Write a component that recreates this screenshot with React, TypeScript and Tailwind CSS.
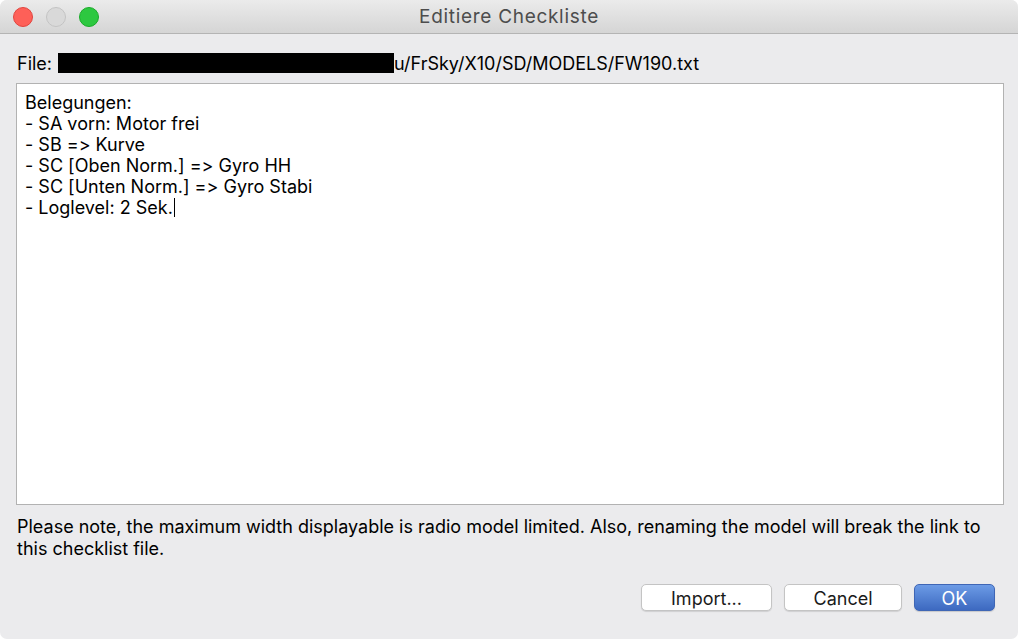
import React from "react";

const lines = [
  "Belegungen:",
  "- SA vorn: Motor frei",
  "- SB => Kurve",
  "- SC [Oben Norm.] => Gyro HH",
  "- SC [Unten Norm.] => Gyro Stabi",
  "- Loglevel: 2 Sek.",
];

function Light({ color, ring }: { color: string; ring: string }) {
  return <span className={`w-[20px] h-[20px] rounded-full border ${color} ${ring}`} />;
}

export default function App() {
  return (
    <div
      className="w-[1021px] h-[640px] bg-white [font-feature-settings:'calt'_0,'liga'_0]"
      style={{ fontFamily: "Inter, \"Liberation Sans\", sans-serif" }}
    >
      <div className="w-[1018px] h-[639px] rounded-[7px] overflow-hidden bg-[#ebebed] flex flex-col">
        {/* title bar */}
        <div className="h-[34px] shrink-0 grid grid-cols-[1fr_auto_1fr] items-center bg-gradient-to-b from-[#ebebeb] to-[#d5d5d5] border-b border-[#b4b4b4]">
          <div className="flex items-center gap-[13px] pl-[13px]">
            <Light color="bg-[#fe6058]" ring="border-[#e0443e]" />
            <Light color="bg-[#d9d9d9]" ring="border-[#c3c3c3]" />
            <Light color="bg-[#2dc840]" ring="border-[#1aab29]" />
          </div>
          <div className="text-[19px] tracking-[0.7px] text-[#4d4d4d] pt-[1px]">Editiere Checkliste</div>
          <div />
        </div>

        {/* body */}
        <div className="flex-1 flex flex-col px-[16px]">
          <div className="flex items-center h-[20px] mt-[19px] text-[18px] text-black">
            <span className="ml-[1px]">File:</span>
            <span className="w-[336px] h-[20px] bg-black ml-[6px]" />
            <span>u/FrSky/X10/SD/MODELS/FW190.txt</span>
          </div>

          <div className="mt-[10px] h-[422px] w-[988px] bg-white border border-[#b2b2b2] pt-[8px] pl-[8px] text-[18px] leading-[21px] text-black">
            {lines.map((l, i) => (
              <div key={i} className="flex items-center">
                <span>{l}</span>
                {i === lines.length - 1 && <span className="w-[1px] h-[19px] bg-black ml-[1px]" />}
              </div>
            ))}
          </div>

          <p className="mt-[11px] ml-[1px] text-[18px] leading-[22px] text-black w-[980px]">
            Please note, the maximum width displayable is radio model limited. Also, renaming the model will break the link to this checklist file.
          </p>

          <div className="mt-[24px] flex justify-end gap-[12px] pr-[7px] text-[18px]">
            <button className="w-[131px] h-[27px] rounded-[5px] bg-white border border-[#c4c4c4] shadow-[0_1px_1px_rgba(0,0,0,0.12)] text-[#1a1a1a]">
              Import...
            </button>
            <button className="w-[118px] h-[27px] rounded-[5px] bg-white border border-[#c4c4c4] shadow-[0_1px_1px_rgba(0,0,0,0.12)] text-[#1a1a1a]">
              Cancel
            </button>
            <button className="w-[81px] h-[27px] rounded-[5px] bg-gradient-to-b from-[#6c9be6] to-[#3d69c0] border border-[#3f66b5] text-white shadow-[0_1px_1px_rgba(0,0,0,0.15)]">
              OK
            </button>
          </div>
        </div>
      </div>
    </div>
  );
}
